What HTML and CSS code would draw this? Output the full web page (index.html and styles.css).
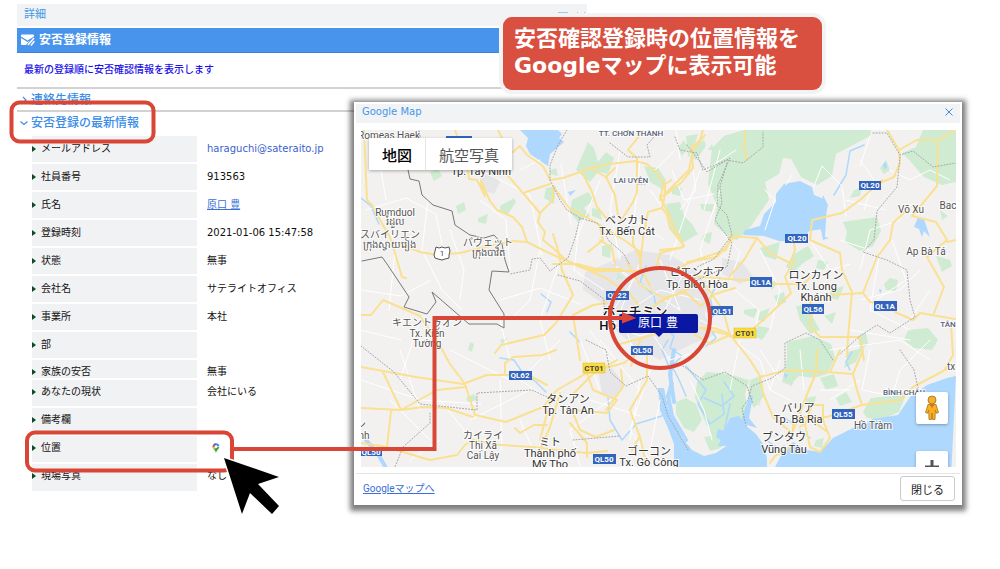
FILE: index.html
```html
<!DOCTYPE html>
<html lang="ja">
<head>
    <meta charset="UTF-8">
    <meta name="viewport" content="width=device-width, initial-scale=1.0">
    <title>安否登録情報</title>
    <link rel="stylesheet" href="styles.css">
</head>
<body>
    <main class="stage">
        <section class="detail">
            <header class="detail-header">
                <span>詳細</span>
                <svg class="window-icons" viewBox="0 0 30 4" aria-hidden="true">
                    <path d="M1 1.5h10M19 3l2-2M26 3l2-2"/>
                </svg>
            </header>
            <div class="detail-body">
                <h1 class="title-bar">
                    <svg class="mail-icon" viewBox="0 0 14 12" aria-hidden="true">
                        <path class="mail-fill" d="M1 .5h11a1 1 0 0 1 1 1v1L6.500 6.500 0 2.500v-1a1 1 0 0 1 1-1z"/>
                        <path class="mail-fill" d="M0 4l6.500 4L9 6.500 5 11H1a1 1 0 0 1-1-1z"/>
                        <path class="mail-pen" d="M13 4L7 11M13.500 7l-3.500 4.500"/>
                    </svg>
                    安否登録情報
                </h1>
                <p class="notice">最新の登録順に安否確認情報を表示します</p>
                <h2 class="group">
                    <svg viewBox="0 0 8 8" aria-hidden="true"><path d="M3 1l3 3-3 3"/></svg>連絡先情報
                </h2>
                <h2 class="group">
                    <svg viewBox="0 0 8 8" aria-hidden="true"><path d="M.5 2.500l3.500 3 3.500-3"/></svg>安否登録の最新情報
                </h2>
                <table class="info">
                    <tbody>
                        <tr><th scope="row">メールアドレス</th><td><a class="mail" href="mailto:haraguchi@sateraito.jp">haraguchi@sateraito.jp</a></td></tr>
                        <tr><th scope="row">社員番号</th><td>913563</td></tr>
                        <tr><th scope="row">氏名</th><td><a href="#user">原口 豊</a></td></tr>
                        <tr><th scope="row">登録時刻</th><td>2021-01-06 15:47:58</td></tr>
                        <tr><th scope="row">状態</th><td>無事</td></tr>
                        <tr><th scope="row">会社名</th><td>サテライトオフィス</td></tr>
                        <tr><th scope="row">事業所</th><td>本社</td></tr>
                        <tr><th scope="row">部</th><td></td></tr>
                        <tr class="short"><th scope="row">家族の安否</th><td>無事</td></tr>
                    </tbody>
                    <tbody class="lower">
                        <tr><th scope="row">あなたの現状</th><td>会社にいる</td></tr>
                        <tr><th scope="row">備考欄</th><td></td></tr>
                        <tr><th scope="row">位置</th><td>
                            <a class="pin" href="#map" aria-label="地図を表示">
                                <svg viewBox="0 0 8 10">
                                    <path fill="#34a853" d="M4 10C3.500 7.500 1 6 .6 4l3.400 0h3.400C7 6 4.500 7.500 4 10z"/>
                                    <path fill="#4285f4" d="M4 .2A3.500 3.500 0 0 1 7.400 3L4 4z"/>
                                    <path fill="#1a73e8" d="M4 .2A3.500 3.500 0 0 0 1.200 1.500L4 4z"/>
                                    <path fill="#ea4335" d="M1.200 1.500A3.500 3.500 0 0 0 .6 4l1.600 1L4 3.500z"/>
                                    <path fill="#fbbc04" d="M.6 4c.1 1 .8 1.900 1.500 2.700L5 4z"/>
                                    <circle cx="4" cy="3.700" r="1.400" fill="#fff"/>
                                </svg>
                            </a>
                        </td></tr>
                        <tr><th scope="row">現場写真</th><td>なし</td></tr>
                    </tbody>
                </table>
            </div>
        </section>

        <section class="dialog" role="dialog" aria-labelledby="dialog-title">
            <header class="dialog-header">
                <h2 id="dialog-title">Google Map</h2>
                <button class="close-x" type="button" aria-label="閉じる">
                    <svg viewBox="0 0 8 8"><path d="M.5 .5l7 7M7.500 .5l-7 7"/></svg>
                </button>
            </header>
            <div class="map" id="map">
                <svg class="map-canvas" viewBox="361 130 595 337">
                    <rect class="land" x="361" y="130" width="595" height="337"/>

                    <!-- urban areas -->
                    <g class="urban">
                        <path d="M585 272l25-10 25-12 35 5 25 15 15 20-5 25 10 20-25 10-30 15-20-10-25-20-10-25-22-15z"/>
                        <path d="M480 178l12-6 8 10-6 12-12-4z"/>
                        <path d="M598 370l14-2 12 16-8 14-14-4z"/>
                        <path d="M722 258l20 4 12 16-14 6-18-10z"/>
                        <path d="M750 382l8-4 4 14-2 14-8-4z"/>
                    </g>

                    <!-- forests and parks -->
                    <g class="green">
                        <path d="M765 130h106l-1 6-34 18-4 22-15 9-16-8-10-18-8-1-4 16-14 8 4 18-18 26-14 14-7-2-16-14 3-18-9-22 4-36 12-12 20-6z"/>
                        <path d="M923 130h33v52l-14 3-18-8-14-16-8-8 14-6z"/>
                        <path d="M843 222l34-5 4 14-8 15-13 5-15-9 2-10z"/>
                        <path d="M787 342l26-6 18 8 4 14-8 16-14 4-14-2-8 8-8-6 4-20z"/>
                        <path d="M908 330l20-2 10 12-6 10-18-2-10-8z"/>
                        <path d="M697 382l10-10 22 2 20 6-4 14 4 20-12 8-8 2-2 12-10 8-8-14-8-18-6-14z"/>
                        <path d="M676 402l10-4 10 6 6 16-8 12-10-4-8-14z"/>
                        <path d="M704 437l14-2 14 6-14 8-8 2z"/>
                        <path d="M863 412l8-14 20-2 16-4-8 20-18 8-14-2z"/>
                        <path d="M576 170l12-28 6 6 4 14 8-10 8 6-6 16-10-2-8 10z"/>
                        <path d="M572 200l16-8 6 8-10 8 6 8-12 6-8-10z"/>
                        <path d="M592 208l8 2 2 10-10-4z"/>
                        <path d="M546 188l10-2-2 18-10-6z"/>
                        <path d="M644 166l14 2 8 12-2 10-14-8z"/>
                        <path d="M666 204l14-2 4 14 8 8 6 10-14 8-12-10z"/>
                        <path d="M686 136l12-2-4 12 10-6 2 6-10 14-8-4z"/>
                        <path d="M500 206l14-8 2 4-8 12-8-2z"/>
                        <path d="M602 246l10-2-2 14-8-2zM618 272l6 6-8 2z"/>
                        <path d="M456 206l8-4 2 8-8 4zM478 218l10-4-2 10-8-2zM550 170l6-2 2 8-8-2z"/>
                        <path d="M430 172l8-4 4 8-8 5zM437 145l12-2-4 8z"/>
                        <path d="M760 248l20-6-4 18-12-4zM794 254l14-8 6 10-12 8-10 10-6-8zM766 280l12 2-6 8zM774 296l10-4 2 10-8 4z"/>
                        <path d="M744 310l14-2-4 10-10-4zM760 312l10-4-6 14-6-2zM758 326l12 2-8 12-8-4z"/>
                        <path d="M796 306l14-2 2 12 8 14-10 4-10-14zM830 290l14-4-6 14-8-2zM824 316l12-4-4 12z"/>
                        <path d="M884 284l6-6 8 2-2 12-10-2zM936 256l14 4 2 6-10 6zM940 210l8 6-6 4z"/>
                        <path d="M678 148l6-8 4 8-6 8zM672 186l10 2-2 8-8-2zM708 150l4-6 2 6z"/>
                        <path d="M728 182l8-12 4 6-8 12zM700 204l14 0-2 8-10-2zM704 234l8-2-2 12-8-4z"/>
                        <path d="M880 168l6-8 4 10-6 4zM854 190l8-2-2 8-10 2zM818 260l10 2-4 8-8-2z"/>
                        <path d="M466 398l8-4 4 6-10 2zM470 342l4 2-2 8-4-2zM500 340l8-2-6 6z"/>
                        <path d="M820 378l14-4 4 12-12 4zM836 398l10-6 6 10-12 4zM784 376l12-2-4 12-10-4zM806 398l10-2-2 10-8-2z"/>
                        <path d="M750 380l10-4 4 20-10 12-6-10zM816 440l8-2-2 10-8-2zM858 336l8-4 2 12-8 8z"/>
                        <path d="M848 352l14-4-6 14-12 6z"/>
                    </g>

                    <!-- sea, lakes and rivers -->
                    <g class="water">
                        <path d="M956 376l-9 2-20 7-17 12-12 18-25 4-20 9-20 10-13 14-13-2-14-8-10 10-8 15h-8v-9l-4-14-7-10-12-10-5-8-9 2-6 13-6-2-2 8 12 8-12 8-12 3-12-6-10-12-6-16-8-14-4-20h-6l2 22 8 18 6 16v34h277z"/>
                        <path d="M520 130l8 8-2 8 4 8 18 12 2-12 14-12-5-4 3-4-4-4z"/>
                        <path d="M776 194l8-10 16-3 12 6 2 8 10 4 4 6-3 12-2 12-14 2-4 7-10 4-16-1-15-5-21-1 2-5 15-4 4-12 12-12z"/>
                        <path d="M823 195l4 8-2 34 4 1-6 2-4-20zM918 217l6 2 6 18-6-6-2 6-3-8-5-2z"/>
                        <path d="M740 423l10-28 3 1-4 22 8 10zM718 446l8-18 6 2-2 16z"/>
                        <path d="M883 164l3-2 1 6-3 1zM568 192l8-2-6 6zM879 289l3 1-2 4zM784 373l4 2-3 4z"/>
                    </g>
                    <g class="river">
                        <path d="M720 278l-10 20 4 16-6 10 8 14-10 8M668 330l6 6-4 12 12 8-10 10 8 16 6 14M668 340l-6 10 10 24-4 20"/>
                        <path d="M686 366l20 24-8 14 12 20 14-10-2-20M704 398l18 8 12-10-10-14M730 404l-6 28 10 8"/>
                        <path d="M670 396l-8 20-26 8-14 16-12-20-2-22M500 358l14 2 8 12 14 10 10 10M541 294l10 8-4 10M570 332l10 10"/>
                        <path d="M864 145l-14 6-4 24-12 20M361 198l10 8 8 18M646 266l-6 16 14 14 2 10M852 352l-6 10 4 8"/>
                        <path class="wide" d="M366 440l12 14 8 14M674 350l-4 24 4 28M672 384l-4 12 4 20 14 24"/>
                        <path d="M748 442l12 4-4 8M766 440l12 8M784 446l-4 8M793 424l-8-6M800 430l10 8"/>
                    </g>

                    <!-- minor roads -->
                    <g class="minor">
                        <path d="M366 210l40-12 30 16 6 30M376 140l10 60M428 200l-6 50 20 40 20 20M395 250l-6 60M450 230l14 40-4 30M361 290l40 6 30-16M480 200l26 20 4 50M470 165l60 30 12 60M520 170l20-10"/>
                        <path d="M500 300l40-12 40 16M540 250l-10 50-20 20M560 260l-20 60 10 40M580 220l-6 50 30 20M561 165l10 60M600 180l-24 60M620 150l-10 60 10 50M640 160l-6 60 30 20M650 190l14 20"/>
                        <path d="M690 150l6 40-16 20M700 170l-30 90M672 170l12 30 30-6M720 190l-20 60 10 30M720 150l-16 60M675 150l-20 20M736 150l-30 20M722 232l18 20-10 30M676 130l4 30"/>
                        <path d="M760 250l20 40-10 40M735 290l24 20-6 30M720 330l40 30 10 30M740 340l-10 50M690 380l14 30 8 30M765 190l10 10-10 30M814 186l8-20 20 20 4 30M786 185l6-10M810 240l20 30 20-6M846 200l40 10M840 240l30 10"/>
                        <path d="M860 160l14 20-10 30M870 136l-10 30M890 170l20 10 20-10 20 10M900 220l-30 10-10 40M880 250l-10 60 40 20M860 300l40-10 20-20M892 240l14 40-30 20M930 290l-20 30M850 330l60 10M830 350l70-10 30 20M870 350l-8 40 30 6"/>
                        <path d="M800 350l4 40M780 360l-10 30 20 10M820 390l30 0M760 350l20 30M860 380l-30 20M930 340l-30 30-6 20M361 380l60 20 60 4M400 350l20 60M440 400l40 50M500 380l2 70M470 420l60-30M450 350l60 30M560 340l-40 40 30 20"/>
                        <path d="M580 340l20 50M600 340l40 50M640 380l-10 60M610 400l-40 30 10 36M650 370l-20 60 20 30M660 400l-10 50M590 400l50 16M361 330l40 10M420 320l-20 60M500 320l10 40M520 420l20 46M440 440l-30 20M390 400l40 40"/>
                        <path d="M612 262l20 20-20 30M640 262l-20 50 14 40M600 320l40 16 50-16M620 270l60 40M660 260l20 50M690 260l-30 60M590 330l20 30M650 330l20 30 20-6M700 320l20 10M630 310l30-20 40 10"/>
                    </g>

                    <!-- main roads -->
                    <g class="road">
                        <path d="M364 130l3 70 5 5 12 22 6 10 5 16 7 24 4 1M398 243l22 9 17 3 23-2 20-5 33-7 14 1 20 10 27 12 30 13 26 17 10 13"/>
                        <path d="M455 130l3 8M498 130l4 8M450 164l18 6 1 9 8 1 8 16-4-12M481 181l9 20 7 9 16 7 9 10 5 15"/>
                        <path d="M503 170l20 23 17 20-2 9 7 10-2 8 10 8 13 12 14 7 16 4h44M513 152l7-6 7 9 16 11 7 14 13-2 20-7 7-3 20-4 25-3 12 3 10 9 8 12v10l-3 13 5 7 3 13 14 18"/>
                        <path d="M523 193l27-9M703 130l-3 10-9 8 2 20-12 15-16 12M643 130l-3 5-12 15 9 8v34l-4 10-13 20M582 172l10 20 5 15 10 12M615 168l-9 9 9 18 3 20M590 168l16 9M540 213l13-13v-14"/>
                        <path d="M553 186l10 14 7 9 18 9 12 7 27 17 13 10v14l10 20M662 208l-14 4-5 26-3 28M633 228v16l8 16M600 240l12 8 3 17M588 252l15-12-3-12M683 247l-23 6-4 16M687 262l30-5 17-20 4-1"/>
                        <path d="M553 234l5 16 4 20 11 25-17 28-12 12-43 10-6 8M553 264h24l20 5h24M573 315l20-10 14-2M573 315l7 45M361 315h10l12-15 37 16 20 30 10 18 15 20 10 31 31 7 37-15 14-17 30-17 37-10 17-13"/>
                        <path d="M361 367l22 4 33 6 47 7 24-9h23l22 2 15 8M505 373v-10l8-6 30-2 13-5M361 408l40 2 22-3 23 1 27 9M383 372l18 38 36-20 29-3M391 411l-4 36-26-4"/>
                        <path d="M553 394l-7 23-6 23M560 393l-10 34-10 23M515 428l5 5 14-8h13M386 447l44 13 27-5 8-10 8-5 27 5 33 2 24 3 30 3 20-2M587 373l6 17 24 10-10 13-33-3M621 370l2 17-17 23"/>
                        <path d="M647 350v30l-17 30 10 27 7 30M573 413l7 17 16 7 18-7M570 423l17 20v14M640 436l-8 14M617 360l-24 14-20 20"/>
                        <path d="M627 262l12 22 24 14 22-6 16 14 14-12 20-6M616 326l30-2 34 8 20-4 14 0 16 6M639 318l20-16 26-12 20-8M620 344l22-6 40-12M631 366l10-28"/>
                        <path d="M660 200l3-14 8-6M660 196l14 30 10 20M660 250l20-2M705 135l-12 15-4 20-26 26M745 130l-1 17 3 13M680 267l16-7 30-10 5-14 26 2 13 15 20 10 5-13-1-7M757 238l-13 22-14 16"/>
                        <path d="M795 260l-10 17 6 16-18 18-20 18-23 8M693 276l47 4h10M773 284h30l7-6M882 180l-22 20-18 13-30 7-2 20 30 13 2 17 10 22-4 45-1 20M810 300l2 14-2 12 10 11h40l4 23"/>
                        <path d="M830 295l33-2 7 9 7 1M863 293l14-36 13-17 3-17 14-13M895 312l18 8 7-7 35 6M887 130l12 20 18-10h21l18-10M899 150l1 13-6 14-14 6M938 142l-1 44-14 17-11 13 24 6 11 18-20 17 17 30-10 26M947 242l9-2"/>
                        <path d="M706 286l17 24 7 25 20 25 10 16 3 17 10 24 20 17v-11M700 328l30 7-20 9-16-10M817 350l-1 23-10 24-13 34M760 377l27-7 40 2 26 2 10-24M853 374l4 16 5 15 38-5 13-13 34-18"/>
                        <path d="M862 405l-35 12h-24M812 405h11v15l7 18-10 14-10-5-5-23zM840 350l-10 22M770 463l5-7 15-9M800 427l10-8 16 12M951 325l2 30-8 14"/>
                    </g>

                    <!-- borders -->
                    <g class="province">
                        <path d="M567 130l-9 15-8 20v15l10 20 7 10 13 8-5 20-7 20-18 13-10-13-8 1-2 11-20 4M580 218l17 5 13 19 13 11 7 12M558 275l22 6 24 18v14"/>
                        <path d="M610 143l18 14h22l-3-12 13-15M687 145l13 17 7 10 23-14-12 27-1 20 10 10 5 20-18 24-17 8M675 137l5 13 17 3 6 17 24-10 16 3 20-16v-15"/>
                        <path d="M727 163l-7 24 2 16-7 17 17 23-5 24-30 13-14-10M873 133h14l13 22 13-4 20 16 23-4M900 157l-3 30-20 24-3 29-11 12 24 8 20 10 3 30 5 17-25 16-13-8-17 11-20 18"/>
                        <path d="M833 360l-13-20-14-7-21 10v25l-13 10-20 8-4 14-6 8 4 18M361 346l33 26 26 32 57 6v-17l55-3 15 7M430 413v10l-27 24-8 20M573 440l47-4M586 340l20 10 4 22 16 14 22-10 14 20 6 20 20 34"/>
                        <path d="M683 366l20 14 22-8 22 14 6 18M900 350l14 20 4 18M638 184l8 0"/>
                    </g>
                    <path class="country" d="M419 131l1 6-12 33 2 9 9 2 3 14 11 10 19 6 3 14 15 10 14 3 10-3 8 9 3 16 4 12-17-1-3 19 15 24v14l-7-4h-28l-37-32 4 10-9 12-23-7 5-10-22-33-5-7-20 4"/>

                    <!-- place names -->
                    <g class="place small">
                        <text x="389" y="139">Romeas Haek</text>
                        <text x="395" y="216">Rumduol</text>
                        <text x="395" y="225">រំដួល</text>
                        <text x="390" y="238">スバイリエン</text>
                        <text x="389" y="248">ក្រុងស្វាយរៀង</text>
                        <text x="488" y="246">パヴェット</text>
                        <text x="488" y="256">ក្រុងបាវិត</text>
                        <text x="427" y="326">キエントゥオン</text>
                        <text x="427" y="337">Tx. Kiến</text>
                        <text x="427" y="347">Tường</text>
                        <text x="483" y="439">カイライ</text>
                        <text x="483" y="449">Thị Xã</text>
                        <text x="483" y="459">Cai Lậy</text>
                        <text x="361" y="428">ン</text>
                        <text x="364" y="439">nh</text>
                        <text x="873" y="429">Hồ Tràm</text>
                        <text x="911" y="213">Võ Xu</text>
                        <text x="948" y="209">Bac</text>
                        <text x="926" y="255">Ap Bà Tá</text>
                        <text x="951" y="370">tx</text>
                    </g>
                    <g class="place">
                        <text x="481" y="175">Tp. Tây Ninh</text>
                        <text x="627" y="224">ベンカト</text>
                        <text x="627" y="235">Tx. Bến Cát</text>
                        <text x="697" y="276">ピエンホア</text>
                        <text x="697" y="288">Tp. Biên Hòa</text>
                        <text x="816" y="279">ロンカイン</text>
                        <text x="816" y="290">Tx. Long</text>
                        <text x="816" y="301">Khánh</text>
                        <text x="568" y="403">タンアン</text>
                        <text x="568" y="414">Tp. Tân An</text>
                        <text x="550" y="446">ミト</text>
                        <text x="550" y="457">Thành phố</text>
                        <text x="550" y="468">Mỹ Tho</text>
                        <text x="649" y="455">ゴーコン</text>
                        <text x="649" y="466">Tx. Gò Công</text>
                        <text x="798" y="412">バリア</text>
                        <text x="798" y="423">Tp. Bà Rịa</text>
                        <text x="784" y="441">ブンタウ</text>
                        <text x="784" y="453">Vũng Tàu</text>
                    </g>
                    <g class="place city">
                        <text x="635" y="316">ホーチミン</text>
                        <text x="635" y="330">Hồ Chí Minh</text>
                    </g>
                    <g class="place town">
                        <text x="631" y="136">TT. CHƠN THÀNH</text>
                        <text x="631" y="183">LAI UYÊN</text>
                        <text x="904" y="395">BÌNH CHÂU</text>
                        <text x="948" y="327">TÂN</text>
                    </g>

                    <!-- road numbers -->
                    <g class="shield">
                        <rect x="446" y="136" width="26" height="9"/>
                        <rect x="859" y="181" width="22" height="9"/><text x="870" y="188">QL20</text>
                        <rect x="785" y="234" width="23" height="9"/><text x="797" y="241">QL20</text>
                        <rect x="750" y="277" width="22" height="10"/><text x="761" y="285">QL1A</text>
                        <rect x="874" y="301" width="23" height="10"/><text x="885" y="309">QL1A</text>
                        <rect x="711" y="306" width="22" height="9"/><text x="722" y="314">QL51</text>
                        <rect x="802" y="304" width="22" height="10"/><text x="813" y="312">QL56</text>
                        <rect x="606" y="291" width="23" height="9"/><text x="617" y="298">QL22</text>
                        <rect x="631" y="346" width="22" height="9"/><text x="642" y="353">QL50</text>
                        <rect x="509" y="371" width="23" height="9"/><text x="520" y="378">QL62</text>
                        <rect x="593" y="454" width="23" height="10"/><text x="604" y="462">QL50</text>
                        <rect x="832" y="409" width="23" height="10"/><text x="843" y="417">QL55</text>
                        <rect x="361" y="447" width="21" height="9"/><text x="371" y="455">QL50</text>
                    </g>
                    <g class="shield express">
                        <rect x="734" y="328" width="22" height="10"/><text x="745" y="336">CT01</text>
                        <rect x="583" y="363" width="22" height="10"/><text x="594" y="371">CT01</text>
                    </g>
                    <path class="route" d="M436 247l3 1 3-1 3 1 4-1 1 4-1 4 0 3-4 1-3 1-4-1-3-1-1-3 1-4z"/>
                    <text class="route-no" x="442" y="256">1</text>

                    <!-- user marker -->
                    <g class="marker">
                        <path d="M621 314h75a2 2 0 0 1 2 2v15a2 2 0 0 1-2 2h-33l-4 4-4-4h-34a2 2 0 0 1-2-2v-15a2 2 0 0 1 2-2z"/>
                        <text x="658" y="327">原口 豊</text>
                    </g>
                </svg>
                <div class="map-type">
                    <button class="active" type="button">地図</button>
                    <button type="button">航空写真</button>
                </div>
                <div class="map-controls">
                    <button type="button" aria-label="ストリートビュー">
                        <svg viewBox="0 0 16 26">
                            <path fill="#fbb01f" stroke="#a8741a" stroke-width=".8" d="M4 9.500h8l2.500 8-2 .8-1.200-3L11 24.500H8.600L8 18l-.6 6.500H5l-.3-9.200-1.200 3-2-.8z"/>
                            <circle cx="8" cy="5" r="4" fill="#fbb01f" stroke="#8b7240" stroke-width=".8"/>
                            <path fill="#e2682a" d="M5.500 9.500h5L8 13z"/>
                        </svg>
                    </button>
                    <button type="button" aria-label="拡大">
                        <svg class="plus" viewBox="0 0 16 16"><path d="M8 1v14M1 8h14"/></svg>
                    </button>
                </div>
            </div>
            <footer class="dialog-footer">
                <a href="#google-map">Googleマップへ</a>
                <button type="button">閉じる</button>
            </footer>
        </section>

        <p class="callout">安否確認登録時の位置情報を<br>Googleマップに表示可能</p>

        <svg class="annotations" viewBox="0 0 1000 569" aria-hidden="true">
            <rect x="11.500" y="102.500" width="142" height="39" rx="8"/>
            <rect x="27" y="432.500" width="205" height="38" rx="8"/>
            <circle cx="660" cy="318" r="50"/>
            <path d="M234 449h200.500V318H626"/>
            <path class="head" d="M622 312l14.500 6-14.500 5.500z"/>
            <path class="cursor" d="M224 458l55 19-21 7 21 22-7 8-22-21-8 21z"/>
        </svg>
    </main>
</body>
</html>
```

FILE: styles.css
```css
* {
    box-sizing: border-box;
}

body {
    margin: 0;
    background-color: #fff;
    color: #111;
    font-family: "DejaVu Sans", "Noto Sans CJK JP", sans-serif;
    font-size: 10px;
    line-height: 16px;
}

h1, h2, p {
    margin: 0;
}

button {
    padding: 0;
    border: none;
    background-color: #fff;
    font-family: inherit;
    cursor: pointer;
}

a {
    color: #3a6fd8;
}

.stage {
    position: relative;
    min-height: 100vh;
    overflow: hidden;
}

/* left panel */
.detail {
    width: 57%;
    margin: 4px 0 0 17px;
}

.detail-header {
    display: flex;
    justify-content: space-between;
    height: 22px;
    padding: 0 0 0 7px;
    background-color: #f1f3f5;
    color: #4796ea;
    font-size: 11px;
    line-height: 22px;
}

.window-icons {
    width: 30px;
    height: 4px;
    margin-top: 7px;
    fill: none;
    stroke: #9cc8f8;
}

.detail-body {
    width: 85%;
}

.title-bar {
    display: flex;
    align-items: center;
    gap: 4px;
    height: 25px;
    margin-top: 2px;
    padding: 0 4px;
    background-color: #4894ec;
    border-bottom: 1px solid #3f82d4;
    color: #fff;
    font-size: 12px;
}

.mail-icon {
    width: 14px;
    height: 12px;
}

.mail-fill {
    fill: #fff;
}

.mail-pen {
    fill: none;
    stroke: #fff;
    stroke-width: 1.5;
}

.notice {
    height: 34px;
    padding-left: 7px;
    color: #1d10e8;
    font-weight: 500;
    line-height: 34px;
}

.group {
    display: flex;
    align-items: center;
    gap: 3px;
    height: 23px;
    padding-left: 3px;
    border-top: 2px solid #d2d2d2;
    color: #3a8de8;
    font-size: 12px;
    font-weight: 500;
}

.group svg {
    width: 8px;
    height: 8px;
    fill: none;
    stroke: #3a8de8;
    stroke-width: 1.2;
}

.info {
    width: 97%;
    margin: 1px 0 0 15px;
    border-collapse: collapse;
}

.info th,
.info td {
    height: 28px;
    padding: 0 10px;
    border-top: 2px solid #fff;
    font-weight: 400;
    text-align: left;
}

.info th {
    width: 165px;
    padding: 0;
    background-color: #f1f2f4;
}

.info th::before {
    content: "";
    display: inline-block;
    margin-right: 5px;
    border: 3px solid transparent;
    border-left: 4px solid #0c4a24;
    border-right: none;
}

.info .short th,
.info .short td {
    height: 20px;
    line-height: 10px;
    padding-top: 6px;
}

.info .lower th,
.info .lower td {
    padding-bottom: 3px;
}

.info .mail {
    color: #3a5fd0;
    text-decoration: none;
}

.pin {
    display: flex;
    padding-left: 5px;
}

.pin svg {
    width: 8px;
    height: 10px;
}

/* map window */
.dialog {
    position: absolute;
    top: 102px;
    left: 35.4%;
    right: 3.8%;
    padding: 2px;
    background-color: #fff;
    box-shadow: 0 2px 5px 4px rgba(0, 0, 0, 0.5);
}

.dialog-header {
    display: flex;
    align-items: center;
    justify-content: space-between;
    height: 19px;
    padding: 0 7px 4px 6px;
    background-color: #f1f3f5;
    color: #4796ea;
}

.dialog-header h2 {
    font-size: 10px;
    font-weight: 400;
}

.close-x {
    display: flex;
    background: none;
}

.close-x svg {
    width: 8px;
    height: 8px;
    fill: none;
    stroke: #3a8de8;
}

.map {
    position: relative;
    margin: 7px 4px 6px 5px;
    overflow: hidden;
}

.map-canvas {
    display: block;
    width: 100%;
}

.land { fill: #f2f1f0; }
.urban { fill: #e6e6e9; }
.green { fill: #cfebd2; }
.water { fill: #aed8fd; }

.river,
.minor,
.road,
.province,
.country {
    fill: none;
    stroke-linejoin: round;
    stroke-linecap: round;
}

.river {
    stroke: #aed8fd;
    stroke-width: 1.5;
}

.river .wide {
    stroke-width: 4;
}

.minor {
    stroke: #fff;
    stroke-width: 1;
}

.road {
    stroke: #fae091;
    stroke-width: 2;
}

.province {
    stroke: #a5a5a8;
    stroke-width: 1;
    stroke-dasharray: 1 2;
}

.country {
    stroke: #77787b;
    stroke-width: 1;
}

.place {
    fill: #333;
    font-family: Roboto, "Noto Sans CJK JP", sans-serif;
    font-size: 11px;
    text-anchor: middle;
    stroke: #fff;
    stroke-width: 2;
    stroke-opacity: 0.8;
    paint-order: stroke;
}

.place.small {
    fill: #555;
    font-size: 10px;
}

.place.city {
    fill: #111;
    font-size: 13px;
    font-weight: 500;
}

.place.town {
    fill: #56617a;
    font-size: 8px;
    font-weight: 500;
}

.shield {
    font-family: Roboto, sans-serif;
    font-size: 8px;
    font-weight: 700;
    text-anchor: middle;
}

.shield rect { fill: #3264bf; }
.shield text { fill: #fff; }
.shield.express rect { fill: #fbdc3d; stroke: #d8b92c; stroke-width: 0.5; }
.shield.express text { fill: #444; }

.route {
    fill: #fff;
    stroke: #555;
}

.route-no {
    fill: #444;
    font-family: Roboto, sans-serif;
    font-size: 8px;
    text-anchor: middle;
}

.marker path {
    fill: #0a17a3;
}

.marker text {
    fill: #fff;
    font-size: 12px;
    text-anchor: middle;
}

.map-type {
    position: absolute;
    top: 8px;
    left: 8px;
    display: flex;
    box-shadow: 0 1px 3px rgba(0, 0, 0, 0.3);
}

.map-type button {
    height: 32px;
    padding: 0 13px;
    color: #555;
    font-size: 15px;
}

.map-type .active {
    border-right: 1px solid #e6e6e6;
    color: #000;
    font-weight: 500;
}

.map-controls {
    position: absolute;
    top: 262px;
    right: 8px;
    display: grid;
    gap: 27px;
}

.map-controls button {
    display: grid;
    place-items: center;
    width: 32px;
    height: 32px;
    border-radius: 2px;
    box-shadow: 0 1px 3px rgba(0, 0, 0, 0.3);
}

.map-controls svg {
    width: 16px;
    height: 26px;
}

.map-controls .plus {
    height: 16px;
    fill: none;
    stroke: #555;
    stroke-width: 3;
}

.dialog-footer {
    display: flex;
    align-items: center;
    justify-content: space-between;
    height: 30px;
    padding: 0 5px 0 7px;
    border-top: 1px solid #e4e5e7;
    font-family: Roboto, "Noto Sans CJK JP", sans-serif;
}

.dialog-footer button {
    width: 55px;
    height: 25px;
    border: 1px solid #c9cdd1;
    border-radius: 3px;
    color: #222;
    font-size: 11px;
}

/* callout and arrows on top of both windows */
.callout {
    position: absolute;
    top: 17px;
    left: 50.3%;
    width: 319px;
    padding: 8px 11px 11px;
    border-radius: 9px;
    background-color: #d94f40;
    box-shadow: 0 0 0 4px #f4f3f4;
    color: #fff;
    font-size: 22px;
    font-weight: 700;
    line-height: 27px;
    white-space: nowrap;
}

.annotations {
    position: absolute;
    top: 0;
    left: 0;
    width: 100%;
    fill: none;
    stroke: #d94636;
    stroke-width: 4;
    pointer-events: none;
}

.annotations .head {
    fill: #d94636;
    stroke: none;
}

.annotations .cursor {
    fill: #000;
    stroke: #fff;
    stroke-width: 3;
    paint-order: stroke;
}
```
